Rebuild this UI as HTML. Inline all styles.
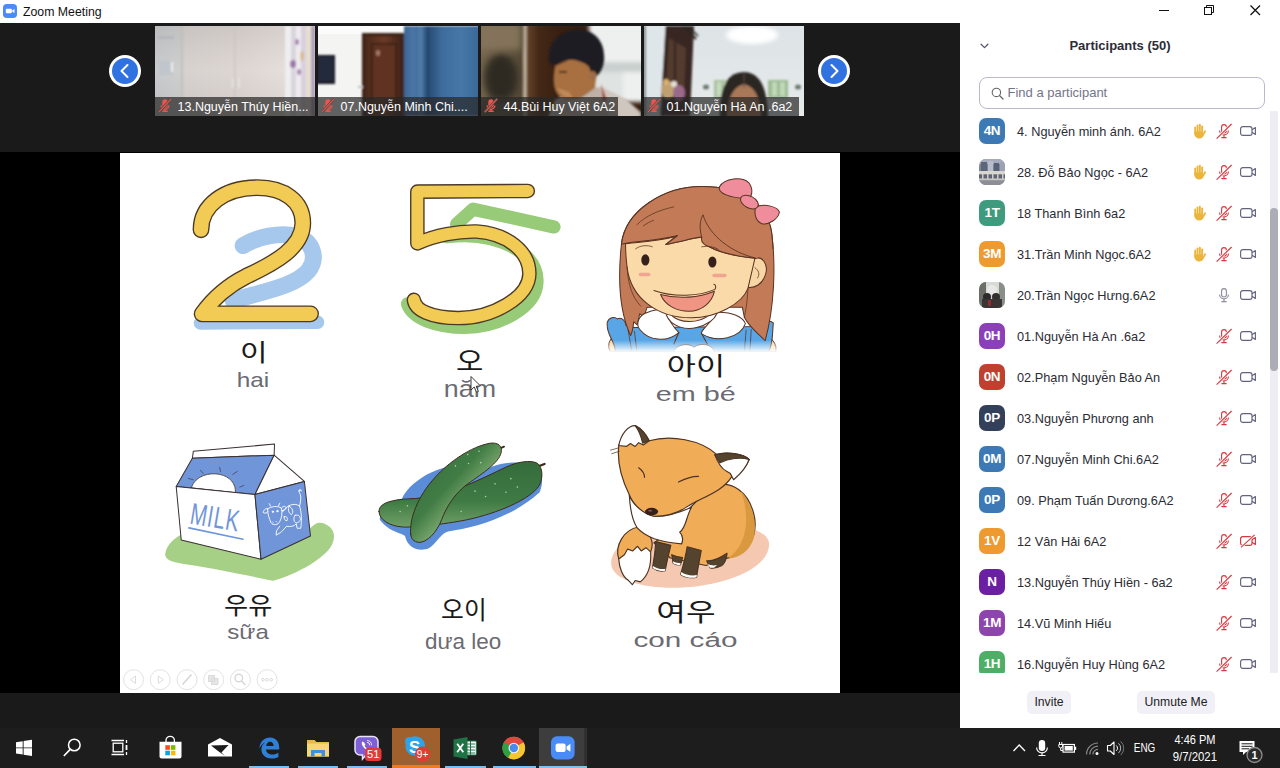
<!DOCTYPE html>
<html lang="vi">
<head>
<meta charset="utf-8">
<title>Zoom Meeting</title>
<style>
*{box-sizing:border-box;margin:0;padding:0}
html,body{width:1280px;height:768px;overflow:hidden;background:#000}
body{position:relative;font-family:"Liberation Sans","Noto Sans CJK KR",sans-serif;color:#222}
.abs{position:absolute}
#titlebar{left:0;top:0;width:1280px;height:23px;background:#fff}
#titlebar .ttl{left:23px;top:4px;font-size:12.3px;color:#111;line-height:16px;white-space:nowrap}
#strip{left:0;top:23px;width:960px;height:129px;background:#1a1a1a}
#stage{left:0;top:152px;width:960px;height:541px;background:#000}
#below{left:0;top:693px;width:960px;height:35px;background:#1a1a1a}
#slide{left:120px;top:153px;width:720px;height:540px;background:#fff;overflow:hidden}
#panel{left:960px;top:23px;width:320px;height:705px;background:#fff;overflow:hidden}
#taskbar{left:0;top:728px;width:1280px;height:40px;background:#1d1d1d}
.thumb{top:26px;width:160px;height:90px;overflow:hidden;background:#ccc}
.thumb .lbl{left:0;top:70.5px;height:19.5px;background:rgba(40,40,40,.72);color:#fff;font-size:12.5px;line-height:21px;padding-left:22.5px;overflow:hidden;padding-right:6px;white-space:nowrap}
.thumb .mic{left:3px;top:72px}
.navbtn{width:32px;height:32px;border-radius:50%;background:#fff;top:55px}
.navbtn i{position:absolute;left:3px;top:3px;width:26px;height:26px;border-radius:50%;background:#3172e1}
/* participants */
.row{left:0;width:320px;height:41px}
.av{left:19px;top:7px;width:26px;height:26px;border-radius:7px;color:#fff;font-weight:bold;font-size:13.5px;line-height:26px;text-align:center;letter-spacing:-.3px}
.nm{left:57px;top:12px;font-size:12.75px;line-height:18px;color:#2b2b33;white-space:nowrap}
.ic{top:11px}
.btn{top:668px;height:23px;border-radius:5px;background:#f0f0f6;font-size:12.2px;line-height:23px;color:#222;text-align:center}
</style>
</head>
<body>
<div id="titlebar" class="abs">
  <svg class="abs" style="left:3.3px;top:4px" width="14" height="14" viewBox="0 0 15 15"><rect x="0" y="0" width="15" height="15" rx="4" fill="#4a8cf7"/><rect x="3" y="5" width="6.5" height="5" rx="1.2" fill="#fff"/><path d="M10 6.8 L12.3 5.3 V9.7 L10 8.2Z" fill="#fff"/></svg>
  <div class="abs ttl">Zoom Meeting</div>
  <svg class="abs" style="left:1150px;top:0" width="130" height="23" viewBox="0 0 130 23" fill="none" stroke="#111" stroke-width="1"><path d="M9 10.5H19"/><rect x="54.5" y="7.5" width="7" height="7"/><path d="M56.5 7.500V5.500H63.500V12.500H61.500"/><path d="M100.500 5.500L110 15M110 5.500L100.500 15" stroke-width="1.250"/></svg>
</div>
<div id="strip" class="abs"></div>
<div id="stage" class="abs"></div>
<div id="below" class="abs"></div>
<svg width="0" height="0" style="position:absolute"><defs>
<symbol id="micoff" viewBox="0 0 14 15"><rect x="4.300" y="1.200" width="5.400" height="8.600" rx="2.700" fill="#e8564c"/><path d="M3.200 7.400a3.800 3.800 0 0 0 7.600 0" fill="none" stroke="#e8564c" stroke-width="1.500"/><path d="M7 11V13M4.300 13.300H9.700" stroke="#e8564c" stroke-width="1.500" fill="none"/><path d="M0.800 14.200L13.200 0.800" stroke="#4a4a4a" stroke-width="2.400"/><path d="M0.800 14.200L13.200 0.800" stroke="#e8564c" stroke-width="1.200"/></symbol>
<filter id="b1" x="-10%" y="-10%" width="120%" height="120%"><feGaussianBlur stdDeviation="1"/></filter>
<filter id="b2" x="-10%" y="-10%" width="120%" height="120%"><feGaussianBlur stdDeviation="2"/></filter>
<filter id="b3" x="-20%" y="-20%" width="140%" height="140%"><feGaussianBlur stdDeviation="3.5"/></filter>
</defs></svg>

<div class="abs navbtn" style="left:109px"><i></i><svg class="abs" style="left:0;top:0" width="32" height="32" viewBox="0 0 32 32"><path d="M18.5 10L12.5 16L18.5 22" fill="none" stroke="#fff" stroke-width="2" stroke-linecap="round" stroke-linejoin="round"/></svg></div>
<div class="abs navbtn" style="left:818px"><i></i><svg class="abs" style="left:0;top:0" width="32" height="32" viewBox="0 0 32 32"><path d="M13.5 10L19.5 16L13.5 22" fill="none" stroke="#fff" stroke-width="2" stroke-linecap="round" stroke-linejoin="round"/></svg></div>

<!-- thumb 1 -->
<div class="abs thumb" style="left:155px">
<svg class="abs" style="left:0;top:0" width="160" height="90" viewBox="0 0 160 90">
<defs><linearGradient id="t1g" x1="0" x2="1"><stop offset="0" stop-color="#c6c8ca"/><stop offset=".16" stop-color="#cdcdcd"/><stop offset=".19" stop-color="#d6d0cd"/><stop offset=".55" stop-color="#dcd5d2"/><stop offset=".8" stop-color="#e4dcd9"/><stop offset="1" stop-color="#dedade"/></linearGradient>
<linearGradient id="t1v" x1="0" y1="0" x2="0" y2="1"><stop offset="0" stop-color="#000" stop-opacity=".06"/><stop offset=".5" stop-color="#fff" stop-opacity=".05"/><stop offset="1" stop-color="#000" stop-opacity=".04"/></linearGradient></defs>
<rect width="160" height="90" fill="url(#t1g)"/>
<rect width="160" height="90" fill="url(#t1v)"/>
<g filter="url(#b1)">
<rect x="3" y="10" width="16" height="3" fill="#b4b8bc"/><rect x="4" y="35" width="14" height="14" fill="#c0c6cc"/><rect x="16" y="36" width="2" height="10" fill="#eef0f2"/>
<rect x="26" y="0" width="2" height="90" fill="#bdbab6" opacity=".7"/>
<rect x="79" y="0" width="1.5" height="90" fill="#c9c3bc" opacity=".8"/><rect x="83" y="52" width="1.5" height="10" fill="#ece8e2"/><rect x="77" y="52" width="1.5" height="10" fill="#ece8e2"/>
<rect x="130" y="0" width="6" height="90" fill="#efeef0"/><rect x="136" y="0" width="5" height="90" fill="#d9d5dc"/><rect x="141" y="0" width="5" height="90" fill="#eeeaf0"/><rect x="146" y="0" width="5" height="90" fill="#d8d0dc"/><rect x="151" y="0" width="5" height="90" fill="#e6dfd0"/><rect x="156" y="0" width="4" height="90" fill="#b0a0bc"/>
<ellipse cx="142" cy="16" rx="2" ry="3" fill="#a887b4"/><ellipse cx="138" cy="38" rx="3" ry="4" fill="#9a78a8"/><ellipse cx="144" cy="46" rx="2" ry="3" fill="#a887b4"/><ellipse cx="147" cy="30" rx="1.5" ry="5" fill="#d8b678"/>
</g>
</svg>
<div class="abs lbl" style="width:160px"><span class="t">13.Nguyễn Thúy Hiền...</span></div>
<svg class="abs mic" width="14" height="15"><use href="#micoff"/></svg>
</div>

<!-- thumb 2 -->
<div class="abs thumb" style="left:318px">
<svg class="abs" style="left:0;top:0" width="160" height="90" viewBox="0 0 160 90">
<defs><linearGradient id="t2c" x1="0" x2="1"><stop offset="0" stop-color="#3d6693"/><stop offset=".12" stop-color="#4b77a6"/><stop offset=".3" stop-color="#335a86"/><stop offset=".34" stop-color="#2b4f78"/><stop offset=".5" stop-color="#3f6c9c"/><stop offset=".75" stop-color="#4677a8"/><stop offset="1" stop-color="#3a6896"/></linearGradient>
<linearGradient id="t2d" x1="0" x2="1"><stop offset="0" stop-color="#4a2a1c"/><stop offset=".5" stop-color="#6b3a26"/><stop offset="1" stop-color="#3e2217"/></linearGradient></defs>
<rect width="160" height="90" fill="#f4f4f2"/>
<rect x="0" y="0" width="88" height="8" fill="#fbfbfb"/>
<g filter="url(#b1)">
<rect x="44" y="7" width="44" height="90" fill="#3a2016"/>
<rect x="47" y="10" width="38" height="90" fill="url(#t2d)"/>
<rect x="54" y="18" width="24" height="62" fill="#5e3221" stroke="#3b1f14" stroke-width="1.5"/>
<ellipse cx="60" cy="27" rx="2" ry="3" fill="#a57c6a"/>
<rect x="-2" y="29" width="19" height="29" fill="#1a1f2b"/><rect x="0" y="31" width="15" height="24" fill="#232a3a"/>
<rect x="86" y="0" width="76" height="90" fill="url(#t2c)"/>
<rect x="108" y="0" width="3" height="90" fill="#24466c" opacity=".8"/>
<rect x="100" y="0" width="5" height="90" fill="#5a86b6" opacity=".6"/>
<rect x="40" y="60" width="5" height="2" fill="#bbb"/>
</g>
</svg>
<div class="abs lbl" style="width:160px"><span class="t">07.Nguyễn Minh Chi....</span></div>
<svg class="abs mic" width="14" height="15"><use href="#micoff"/></svg>
</div>

<!-- thumb 3 -->
<div class="abs thumb" style="left:481px">
<svg class="abs" style="left:0;top:0" width="160" height="90" viewBox="0 0 160 90">
<defs><linearGradient id="t3g" x1="0" x2="1"><stop offset="0" stop-color="#75664c"/><stop offset=".14" stop-color="#62553f"/><stop offset=".25" stop-color="#574a37"/><stop offset=".275" stop-color="#b9ad9c"/><stop offset=".30" stop-color="#5e3f28"/><stop offset=".36" stop-color="#452816"/><stop offset=".5" stop-color="#371f12"/><stop offset="1" stop-color="#371f12"/></linearGradient></defs>
<rect width="160" height="90" fill="url(#t3g)"/>
<g filter="url(#b3)">
<rect x="-4" y="-4" width="44" height="28" fill="#84735a"/>
<ellipse cx="20" cy="52" rx="17" ry="24" fill="#2f2c24"/>
<ellipse cx="18" cy="84" rx="24" ry="10" fill="#5c503c"/>
</g>
<g filter="url(#b2)">
<rect x="108" y="-4" width="60" height="80" fill="#eef0ef"/>
<rect x="116" y="36" width="50" height="10" fill="#c9cfce"/>
<rect x="112" y="46" width="30" height="30" fill="#dfe3e2"/>
</g>
<g filter="url(#b1)">
<path d="M66 94 L74 74 Q100 58 122 62 L146 74 L160 86 L160 94Z" fill="#bdb1a8"/>
<path d="M118 60 L146 74 L160 90 L130 94Z" fill="#cfc6be"/>
<path d="M120 58 L126 74 L122 76Z" fill="#a8453c"/>
<path d="M74 40 Q70 62 78 70 Q86 76 100 72 L114 62 L116 42 L96 30Z" fill="#a8703f"/>
<path d="M76 62 Q80 72 92 72 L88 66Z" fill="#c08a5c"/>
<path d="M68 36 Q66 10 92 4 Q116 2 122 22 Q126 40 116 50 L110 46 Q108 38 100 36 Q86 30 74 40Z" fill="#1d1b22"/>
<ellipse cx="112" cy="50" rx="3.500" ry="5" fill="#9c6c4a"/>
<path d="M78 46h8" stroke="#2a1a12" stroke-width="1.500"/>
</g>
</svg>
<div class="abs lbl" style="width:137px"><span class="t">44.Bùi Huy Việt 6A2</span></div>
<svg class="abs mic" width="14" height="15"><use href="#micoff"/></svg>
</div>

<!-- thumb 4 -->
<div class="abs thumb" style="left:644px">
<svg class="abs" style="left:0;top:0" width="160" height="90" viewBox="0 0 160 90">
<defs><radialGradient id="t4l" cx="0.66" cy="0.1" r="0.32" gradientTransform="scale(1 .55)"><stop offset="0" stop-color="#fff"/><stop offset=".55" stop-color="#fdfefe"/><stop offset="1" stop-color="#e3e8ea" stop-opacity="0"/></radialGradient>
<linearGradient id="t4w" x1="0" y1="0" x2="0" y2="1"><stop offset="0" stop-color="#dde3e6"/><stop offset="1" stop-color="#e6eaeb"/></linearGradient></defs>
<rect width="160" height="90" fill="url(#t4w)"/>
<g filter="url(#b2)"><ellipse cx="108" cy="9" rx="26" ry="9" fill="#fff"/></g>
<g filter="url(#b1)">
<rect x="0" y="0" width="22" height="90" fill="#dfe6ea"/>
<path d="M21.500 0 L50 0 L46 90 L16 90Z" fill="#382822"/>
<path d="M25 12 L42 22 L40 72 L21 72Z" fill="#523a2e"/>
<path d="M31 16 L31 70" stroke="#2e201a" stroke-width="1.500"/>
<path d="M40 0 L52 13" stroke="#2a2622" stroke-width="2"/><path d="M44 0 L54 10" stroke="#2a2622" stroke-width="1.500"/>
<rect x="0" y="0" width="1.500" height="90" fill="#2a2a2a"/>
<ellipse cx="24" cy="64" rx="7" ry="9" fill="#c0a070"/><ellipse cx="35" cy="67" rx="6" ry="8" fill="#9a6a8a"/><ellipse cx="22" cy="56" rx="3" ry="3" fill="#d9b070"/><ellipse cx="30" cy="58" rx="3" ry="3" fill="#e8e0d8"/>
<rect x="70" y="54" width="18" height="18" fill="#a9c2a0"/><rect x="124" y="54" width="20" height="18" fill="#9dbb94"/>
<rect x="73" y="56" width="4" height="14" fill="#c8dcc0"/><rect x="80" y="56" width="4" height="14" fill="#c8dcc0"/><rect x="128" y="56" width="5" height="14" fill="#c0d8b8"/><rect x="136" y="56" width="5" height="14" fill="#c0d8b8"/>
<ellipse cx="62" cy="61" rx="3" ry="2.5" fill="#6a7a6a"/><ellipse cx="154" cy="61" rx="3" ry="2.5" fill="#6a7a6a"/>
<path d="M76 94 Q74 46 100 46 Q124 46 124 94Z" fill="#2b2624"/>
<path d="M83 94 Q83 62 100 58 Q117 62 117 94Z" fill="#a87858"/>
<path d="M100 47 V62" stroke="#5a4c46" stroke-width="1"/>
</g>
</svg>
<div class="abs lbl" style="width:155px"><span class="t">01.Nguyễn Hà An .6a2</span></div>
<svg class="abs mic" width="14" height="15"><use href="#micoff"/></svg>
</div>

<div id="slide" class="abs">
<svg class="abs" style="left:0;top:0" width="720" height="540" viewBox="120 153 720 540">
<defs>
<linearGradient id="fadeb" x1="0" y1="0" x2="0" y2="1"><stop offset="0" stop-color="#fff" stop-opacity="0"/><stop offset="1" stop-color="#fff"/></linearGradient>
<linearGradient id="cuc1" x1="0" y1="0" x2="0" y2="1"><stop offset="0" stop-color="#356b3c"/><stop offset=".6" stop-color="#3f7a44"/><stop offset="1" stop-color="#6fa066"/></linearGradient>
<linearGradient id="cuc2" x1="0" y1="0" x2="1" y2="1"><stop offset="0" stop-color="#34693b"/><stop offset=".42" stop-color="#417c45"/><stop offset=".6" stop-color="#7aa86e"/><stop offset=".74" stop-color="#447f48"/><stop offset="1" stop-color="#34693b"/></linearGradient>
</defs>
<rect x="120" y="153" width="720" height="540" fill="#fff"/>

<!-- number 2 -->
<g transform="translate(180,170) scale(0.2213)" fill="none" stroke-linecap="round" stroke-linejoin="round">
<path d="M285,342 C350,300 450,282 525,298 C605,322 622,402 580,455 C520,525 380,548 240,590" stroke="#a6c8ec" stroke-width="76"/>
<path d="M92,692 L622,688" stroke="#a6c8ec" stroke-width="60"/>
<path id="p2" d="M95,270 C95,160 200,80 350,80 C470,80 555,140 555,240 C555,350 430,420 300,480 C220,520 150,580 100,650 L590,650" stroke="#4b3a26" stroke-width="76"/>
<path d="M95,270 C95,160 200,80 350,80 C470,80 555,140 555,240 C555,350 430,420 300,480 C220,520 150,580 100,650 L590,650" stroke="#f2cb55" stroke-width="64"/>
</g>

<!-- number 5 -->
<g transform="translate(390,170) scale(0.2278)" fill="none" stroke-linecap="round" stroke-linejoin="round">
<path d="M292,238 L365,172 L720,250" stroke="#98cb78" stroke-width="58"/>
<path d="M250,292 C330,282 400,290 440,300 C580,335 650,410 644,495 C640,600 480,690 330,690 C200,690 100,650 78,588" stroke="#98cb78" stroke-width="60"/>
<path d="M605,92 L120,95 L120,322 C200,285 300,268 380,270 C520,280 612,360 612,455 C610,560 450,650 300,650 C180,650 110,615 105,570" stroke="#4b3a26" stroke-width="64"/>
<path d="M605,92 L120,95 L120,322 C200,285 300,268 380,270 C520,280 612,360 612,455 C610,560 450,650 300,650 C180,650 110,615 105,570" stroke="#f2cb55" stroke-width="52"/>
</g>

<!-- girl -->
<g transform="translate(590,165) scale(0.2539)" stroke="#5a3323" stroke-width="4" stroke-linejoin="round" stroke-linecap="round">
<!-- dress & arms -->
<path d="M80,735 C66,712 76,688 92,676 L130,735Z" fill="#f7d7a6"/>
<path d="M702,676 C722,688 738,712 732,735 L690,735Z" fill="#f7d7a6"/>
<path d="M68,620 C74,600 96,596 108,606 C122,598 140,610 142,632 L175,640 L680,636 C690,612 706,610 722,622 C718,660 722,700 704,735 L100,735 C98,690 62,668 68,620Z" fill="#58a6e6"/>
<path d="M150,650 L165,735 M175,655 L185,735 M615,650 L608,735 M635,648 L630,735" fill="none" stroke-width="3"/>
<!-- hair back -->
<path d="M160,672 C108,560 112,420 124,310 C140,180 290,85 440,85 C600,85 700,150 716,270 C732,400 726,560 690,692 C660,662 628,640 608,600 L600,560 L225,560 L212,600 L196,585 L186,630 L172,618 C170,640 166,660 160,672Z" fill="#c27b56"/>
<!-- neck -->
<path d="M330,560 L470,560 L470,620 L330,620Z" fill="#f7d7a6" stroke="none"/>
<!-- ribbon -->
<path d="M330,735 C340,705 390,700 410,718 C430,700 480,702 490,735" fill="#fff" stroke-width="3"/>
<!-- collar -->
<path d="M215,585 C250,568 290,563 300,575 C310,620 340,650 350,660 C300,702 230,690 198,650 C180,630 188,600 215,585Z" fill="#fff"/>
<path d="M500,580 C560,578 602,598 612,625 C592,682 500,702 440,665 C430,655 470,630 500,580Z" fill="#fff"/>
<path d="M300,590 C320,640 380,650 420,640 C460,630 490,610 500,585" fill="#fff"/>
<path d="M320,590 C350,625 430,625 470,590" fill="#f7d7a6"/>
<path d="M350,660 L330,705 M440,665 L462,705" fill="none"/>
<!-- ear -->
<path d="M640,372 C680,350 705,395 690,435 C678,470 650,485 622,482Z" fill="#f7d7a6"/>
<path d="M650,405 C665,415 670,430 660,445" fill="none" stroke-width="3"/>
<!-- face -->
<path d="M140,310 C200,302 290,300 340,280 L300,312 C360,302 420,282 440,286 C448,300 442,312 470,322 C520,350 600,362 650,366 L622,486 C600,545 500,602 400,602 C262,602 160,522 146,402 C142,370 140,340 140,310Z" fill="#f9daa8"/>
<!-- fringe overlay -->
<path d="M126,312 C170,300 260,300 345,278 L298,313 C350,304 410,286 440,284 C436,300 446,314 470,322 C520,350 600,362 655,368 C700,340 716,300 716,270 C700,150 600,85 440,85 C290,85 140,180 126,312Z" fill="#c27b56" stroke="none"/>
<path d="M124,312 C170,300 260,300 345,278 L298,313 C350,304 410,286 440,284 C436,300 446,314 470,322 C520,350 600,362 655,368" fill="none"/>
<path d="M124,310 C140,180 290,85 440,85 C600,85 700,150 716,270 C718,290 720,310 721,330" fill="none"/>
<path d="M440,284 C430,250 432,220 445,196 C470,280 560,345 650,366" fill="none" stroke-width="3.500"/>
<path d="M185,235 C220,200 270,178 330,165 M210,240 C225,228 240,222 250,218" fill="none" stroke-width="3"/>
<path d="M146,402 C150,470 165,520 200,556 M622,486 C620,540 612,580 608,600" fill="none" stroke-width="3"/>
<!-- eyes -->
<ellipse cx="218" cy="374" rx="16" ry="22" fill="#35211a" stroke="none"/>
<ellipse cx="482" cy="382" rx="16" ry="22" fill="#35211a" stroke="none"/>
<path d="M180,330 C200,315 225,315 245,322 M440,322 C465,318 490,322 505,332" fill="none" stroke-width="3"/>
<rect x="192" y="424" width="46" height="14" rx="7" fill="#f2a391" stroke="none"/>
<rect x="482" y="428" width="56" height="14" rx="7" fill="#f2a391" stroke="none"/>
<!-- mouth -->
<path d="M278,510 C350,530 430,522 490,497 C482,540 440,576 390,576 C340,576 295,552 278,510Z" fill="#f09484"/>
<path d="M252,494 C330,522 430,518 492,490 C498,480 495,472 488,470" fill="none"/>
<!-- bow -->
<path d="M602,130 C560,130 500,112 510,86 C530,50 600,45 626,70 C640,90 640,110 632,126Z" fill="#f08d9d"/>
<path d="M652,165 C690,150 740,165 746,186 C740,216 700,236 680,232 C655,226 645,196 652,165Z" fill="#f08d9d"/>
<ellipse cx="628" cy="146" rx="38" ry="23" transform="rotate(28 628 146)" fill="#f08d9d"/>
<rect x="40" y="690" width="720" height="48" fill="url(#fadeb)" stroke="none"/>
<rect x="40" y="736" width="720" height="40" fill="#fff" stroke="none"/>
</g>

<!-- milk -->
<g transform="translate(155,435) scale(0.2019)" stroke="#3a3030" stroke-width="5" stroke-linejoin="round" stroke-linecap="round">
<path d="M50,592 C56,540 108,500 150,486 L500,560 L760,470 C800,430 815,430 840,440 C885,460 895,495 880,535 C855,605 700,692 585,722 C480,702 300,662 160,642 C90,630 52,622 50,592Z" fill="#a5d086" stroke="none"/>
<path d="M185,115 L190,80 L592,45 L590,100Z" fill="#fff"/>
<path d="M105,255 L185,115 L590,100 L495,295Z" fill="#7195d9"/>
<path d="M495,295 L590,100 L740,230Z" fill="#fff"/>
<path d="M180,260 C200,200 270,185 320,195 C372,206 402,242 398,284Z" fill="#fff" stroke-width="4"/>
<path d="M165,215 L190,222 M225,175 L240,192 M320,160 L325,182 M385,195 L408,180 M420,258 L440,250" fill="none" stroke-width="3"/>
<path d="M105,255 L495,295 L525,615 L130,520Z" fill="#fff"/>
<path d="M495,295 L740,230 L770,500 L525,615Z" fill="#7195d9"/>
<g stroke="none" fill="#7195d9"><text transform="translate(168,438) rotate(9.500) scale(.66,1)" font-family="'Liberation Sans',sans-serif" font-size="150" letter-spacing="6">MILK</text></g>
<path d="M168,460 L436,516" stroke="#7195d9" stroke-width="8" fill="none"/>
<g fill="none" stroke="#fff" stroke-width="4.500">
<path d="M558,366 C575,352 610,350 626,362 C632,385 628,410 618,428 C612,446 585,450 574,434 C566,412 556,390 558,366Z"/>
<path d="M558,366 C548,362 538,370 536,384 C546,390 556,386 560,380 M626,362 C634,350 646,350 650,362 C646,372 636,376 628,374"/>
<path d="M572,352 L566,340 M612,350 L618,338"/>
<circle cx="584" cy="380" r="3.500" fill="#fff"/><circle cx="606" cy="377" r="3.500" fill="#fff"/>
<path d="M582,430 l3,3 M600,428 l3,3"/>
<path d="M632,380 C650,350 690,332 716,352 C728,390 726,430 722,462 L704,462 L700,440 C690,452 670,456 652,452 L624,482 L600,496 L602,474 L618,452"/>
<path d="M716,352 C722,330 724,310 720,296 C716,288 712,282 718,272 M718,272 l-8,6 M718,272 l8,4"/>
<path d="M664,352 C680,362 690,380 676,394 C664,390 656,372 664,352Z M694,398 C708,392 720,400 720,420 C712,436 698,440 690,428 C686,416 688,404 694,398Z M640,404 C650,400 660,410 654,424 C644,426 638,416 640,404Z"/>
</g>
</g>

<!-- cucumbers -->
<g transform="translate(370,435) scale(0.1628)" stroke="#3a2a1c" stroke-width="6" stroke-linejoin="round" stroke-linecap="round">
<path d="M60,520 C120,600 200,600 215,620 C230,690 290,712 340,702 C400,690 430,602 480,592 C640,572 880,502 1042,352 C1062,300 1062,260 1042,200 C950,152 820,170 760,190 C700,205 660,260 600,300 L520,190 C400,195 240,290 196,392 C130,400 60,440 60,520Z" fill="#5b8cd8" stroke="none"/>
<path d="M1035,192 L1072,178" stroke-width="14"/>
<path d="M55,470 C55,420 120,395 280,390 C500,370 700,260 830,200 C900,165 990,150 1030,175 C1060,200 1065,260 1040,310 C980,400 780,480 600,520 C450,550 250,570 200,565 C120,560 55,520 55,470Z" fill="url(#cuc1)"/>
<path d="M800,82 L823,72" stroke-width="12"/>
<path d="M250,610 C240,520 290,380 400,260 C480,170 620,70 740,50 C790,45 815,70 805,110 C790,170 700,230 600,300 C520,360 470,440 440,520 C410,600 350,660 300,660 C270,655 252,640 250,610Z" fill="url(#cuc2)"/>
<g fill="#a9d29a" stroke="none"><circle cx="600" cy="120" r="5"/><circle cx="670" cy="100" r="5"/><circle cx="525" cy="190" r="5"/><circle cx="605" cy="175" r="5"/><circle cx="680" cy="170" r="5"/><circle cx="865" cy="268" r="5"/><circle cx="768" cy="300" r="5"/><circle cx="905" cy="320" r="5"/><circle cx="835" cy="352" r="5"/><circle cx="645" cy="345" r="5"/><circle cx="710" cy="378" r="5"/><circle cx="560" cy="470" r="5"/><circle cx="185" cy="470" r="5"/><circle cx="230" cy="435" r="5"/></g>
</g>

<!-- fox -->
<g transform="translate(600,415) scale(0.2344)" stroke="#4a3424" stroke-width="5" stroke-linejoin="round" stroke-linecap="round">
<path d="M48,640 C40,560 150,490 330,470 C520,450 700,470 720,540 C735,620 620,700 430,728 C250,755 60,720 48,640Z" fill="#f5c9b1" stroke="none"/>
<!-- body -->
<path d="M470,310 C560,268 640,330 660,440 C672,530 622,600 540,612 L452,642 L300,610 L230,545 L330,480 L380,400Z" fill="#f1ac58"/>
<path d="M600,322 C650,380 670,460 657,520 C642,580 592,610 545,612 C625,560 645,440 600,322Z" fill="#d9993e" stroke="none"/>
<!-- legs -->
<path d="M455,622 C485,625 520,605 542,590 C540,615 532,632 520,642 C505,650 485,655 470,652Z" fill="#54442f"/>
<path d="M306,596 C320,602 338,606 352,608 C350,620 346,632 342,640 C330,640 318,636 312,632Z" fill="#54442f"/>
<path d="M238,540 C236,580 230,620 224,652 C240,664 262,668 278,664 C284,630 294,590 302,556Z" fill="#54442f"/>
<path d="M372,562 C366,600 354,645 344,680 C362,692 392,698 412,692 C418,650 426,610 432,578Z" fill="#54442f"/>
<path d="M226,644 C240,654 262,660 279,656 L278,664 C262,668 240,664 224,652Z M347,670 C362,682 392,688 413,683 L412,692 C392,698 362,692 344,680Z M458,636 C470,642 488,644 500,640 L486,652 L470,652Z M312,624 C322,630 334,632 344,632 L342,640 C330,640 318,636 312,632Z" fill="#fff" stroke="none"/>
<!-- tail -->
<path d="M165,478 C100,488 62,560 80,614 L216,584 C234,540 215,500 165,478Z" fill="#f1ac58"/>
<path d="M80,614 C82,650 96,690 120,704 L138,724 L150,706 L172,712 C200,690 220,650 216,584 L196,566 L176,580 L160,560 L140,580 L118,572 L104,596Z" fill="#fff"/>
<!-- chest -->
<path d="M125,340 C128,400 138,450 158,480 C175,500 200,515 232,528 C262,538 300,546 348,550 C356,530 352,512 340,500 C368,482 366,436 390,394 C330,420 280,436 230,432 C180,420 140,380 125,340Z" fill="#fff"/>
<!-- head -->
<path d="M80,130 C100,72 150,82 210,110 C300,84 430,104 500,170 C560,160 620,170 636,190 C620,232 580,260 560,266 C520,330 430,352 370,392 C330,420 280,432 230,432 C180,420 140,380 125,340 C100,290 70,220 80,130Z" fill="#f1ac58"/>
<!-- ears -->
<path d="M80,130 C90,80 120,45 150,45 C180,60 200,90 210,110 L185,128 L165,118 L150,134 L130,122 L112,134Z" fill="#fff"/>
<path d="M150,45 C180,60 200,90 210,110 L182,120 C176,92 166,66 150,45Z" fill="#54442f"/>
<path d="M490,170 C540,155 610,165 636,190 C620,236 586,262 570,276 L556,250 L540,240 C520,230 505,210 490,170Z" fill="#fff"/>
<path d="M490,170 C540,155 610,165 636,190 C600,180 550,184 512,204Z" fill="#54442f"/>
<path d="M165,225 C180,236 190,250 190,266 M335,286 C365,270 395,262 420,262" fill="none" stroke-width="5"/>
<ellipse cx="220" cy="412" rx="28" ry="16" fill="#38201a" stroke="none"/>
<ellipse cx="214" cy="408" rx="8" ry="4" fill="#8a5a4a" stroke="none"/>
<path d="M45,150 L80,140 M50,165 L82,155" fill="none" stroke-width="3"/>
</g>

<!-- labels -->
<g font-family="'Noto Sans CJK KR','NanumGothic',sans-serif" fill="#1a1a1a">
<text transform="translate(240.11,361.34) scale(1.282,1)" font-size="23.30">이</text>
<text transform="translate(456.11,371.19) scale(1.135,1)" font-size="26.22">오</text>
<text transform="translate(666.85,375.23) scale(1.286,1)" font-size="24.62">아이</text>
<text transform="translate(223.99,613.96) scale(1.085,1)" font-size="24.20">우유</text>
<text transform="translate(441.06,619.21) scale(0.999,1)" font-size="24.84">오이</text>
<text transform="translate(656.35,621.30) scale(1.291,1)" font-size="24.95">여우</text>
</g>
<g font-family="'Liberation Sans',sans-serif" fill="#6b6b72">
<text transform="translate(236.80,387.00) scale(1.187,1)" font-size="20.50">hai</text>
<text transform="translate(443.82,397.00) scale(1.167,1)" font-size="23.00">năm</text>
<text transform="translate(655.85,401.40) scale(1.404,1)" font-size="20.50">em bé</text>
<text transform="translate(227.28,639.00) scale(1.174,1)" font-size="20.50">sữa</text>
<text transform="translate(425.00,648.50) scale(1.020,1)" font-size="22.00">dưa leo</text>
<text transform="translate(633.51,646.70) scale(1.414,1)" font-size="21.00">con cáo</text>
</g>

<!-- slide controls -->
<g fill="none" stroke="#e3e3e3" stroke-width="1">
<circle cx="133.600" cy="679.700" r="10"/><circle cx="160.200" cy="679.700" r="10"/><circle cx="187" cy="679.700" r="10"/><circle cx="213.700" cy="679.700" r="10"/><circle cx="240.400" cy="679.700" r="10"/><circle cx="267.100" cy="679.700" r="10"/>
<path d="M135.500,676 L130.500,679.700 L135.500,683.500Z M158.300,676 L163.300,679.700 L158.300,683.500Z" stroke="#dcdcdc"/>
<path d="M182.500,684.500 L191.500,674.500" stroke="#d8d8d8" stroke-width="1.800"/>
<path d="M208.500,675.500 h6 v6 h-6z M211.500,678.500 h6.500 v6 h-6.500z" fill="#e6e6e6" stroke="#dadada"/>
<circle cx="238.800" cy="678" r="3.800" stroke="#d8d8d8" stroke-width="1.400"/><path d="M241.500,681 L245.500,685" stroke="#d8d8d8" stroke-width="1.600"/>
<circle cx="263" cy="679.700" r="1.300" stroke="#dadada"/><circle cx="267.100" cy="679.700" r="1.300" stroke="#dadada"/><circle cx="271.200" cy="679.700" r="1.300" stroke="#dadada"/>
</g>

<!-- cursor -->
<path d="M471,376.500 L471,390 L474.200,387 L476.500,392.200 L478.400,391.400 L476.200,386.300 L480.500,386 Z" fill="#fff" stroke="#222" stroke-width="0.9" stroke-linejoin="round"/>
</svg>

</div>
<div id="panel" class="abs">
<svg width="0" height="0" style="position:absolute"><defs>
<symbol id="pmicoff" viewBox="0 0 16 16"><rect x="5.6" y="1.6" width="4.8" height="8.4" rx="2.4" fill="none" stroke="#d9363e" stroke-width="1.1"/><path d="M3.6 7.6a4.4 4.4 0 0 0 8.8 0" fill="none" stroke="#d9363e" stroke-width="1.1"/><path d="M8 12V14.4M5.4 14.6H10.6" stroke="#d9363e" stroke-width="1.1" fill="none"/><path d="M8.2 9.2a1 1 0 1 0 1.4 -1.4" stroke="#d9363e" stroke-width=".8" fill="none"/><path d="M0.6 15.6L15.6 1" stroke="#fff" stroke-width="2.6"/><path d="M0.6 15.6L15.6 1" stroke="#d9363e" stroke-width="1.1"/></symbol>
<symbol id="pmicon" viewBox="0 0 16 16"><rect x="5.6" y="1.6" width="4.8" height="8.4" rx="2.4" fill="none" stroke="#8a8a9a" stroke-width="1.1"/><path d="M3.6 7.6a4.4 4.4 0 0 0 8.8 0" fill="none" stroke="#8a8a9a" stroke-width="1.1"/><path d="M8 12V14.4M5.4 14.6H10.6" stroke="#8a8a9a" stroke-width="1.1" fill="none"/></symbol>
<symbol id="pcam" viewBox="0 0 16 10"><rect x=".6" y=".6" width="11.4" height="8.8" rx="2.2" fill="none" stroke="#62637f" stroke-width="1.15"/><path d="M12 3.7L15.4 1.6V8.4L12 6.3" fill="none" stroke="#62637f" stroke-width="1.15" stroke-linejoin="round"/></symbol>
<symbol id="pcamoff" viewBox="0 0 16 14"><rect x=".6" y="2.6" width="11.4" height="8.8" rx="2.2" fill="none" stroke="#d9363e" stroke-width="1.15"/><path d="M12 5.7L15.4 3.6V10.4L12 8.3" fill="none" stroke="#d9363e" stroke-width="1.15" stroke-linejoin="round"/><path d="M1 13.4L14.6 .8" stroke="#fff" stroke-width="2.4"/><path d="M1 13.4L14.6 .8" stroke="#d9363e" stroke-width="1.1"/></symbol>
<symbol id="phand" viewBox="0 0 13 16"><g fill="#eab53a"><rect x="1.300" y="3.600" width="1.900" height="8" rx=".95"/><rect x="3.600" y="1.500" width="1.900" height="9" rx=".95"/><rect x="5.900" y=".8" width="1.900" height="9.500" rx=".95"/><rect x="8.200" y="2.400" width="1.900" height="8.500" rx=".95"/><path d="M1.300 8.500H10.100V10.400L11.300 7.600a1 1 0 0 1 1.700 .9L10.300 13.200a4.400 4.400 0 0 1 -3.800 2.300a5 5 0 0 1 -5.200 -4.800z"/></g></symbol>
</defs></svg>
<svg class="abs" style="left:19.5px;top:20px" width="9" height="6.3" viewBox="0 0 10 7"><path d="M1.2 1.4L5 5.2L8.8 1.4" fill="none" stroke="#555566" stroke-width="1.4" stroke-linecap="round" stroke-linejoin="round"/></svg>
<div class="abs" id="phead" style="left:0;top:13.500px;width:320px;text-align:center;font-weight:bold;font-size:13px;line-height:18px;color:#2d2d38">Participants (50)</div>
<div class="abs" style="left:19px;top:54px;width:286px;height:32px;border:1px solid #b9b9cd;border-radius:8px;background:#fff"></div>
<svg class="abs" style="left:30.5px;top:63.5px" width="13" height="13" viewBox="0 0 13 13"><circle cx="5.4" cy="5.4" r="4.2" fill="none" stroke="#666" stroke-width="1.1"/><path d="M8.5 8.5L12 12" stroke="#666" stroke-width="1.2" stroke-linecap="round"/></svg>
<div class="abs" id="pfind" style="left:47.500px;top:61px;font-size:13px;line-height:18px;color:#747488;white-space:nowrap">Find a participant</div>
<div class="abs" style="left:0;top:88px;width:320px;height:562px;overflow:hidden">
<div class="abs row" style="top:0px"><div class="abs av" style="background:#3d7ab5">4N</div><div class="abs nm">4. Nguyễn minh ánh. 6A2</div><svg class="abs" style="left:232.5px;top:12px" width="13" height="16"><use href="#phand"/></svg><svg class="abs" style="left:256px;top:12px" width="16" height="16"><use href="#pmicoff"/></svg><svg class="abs" style="left:280px;top:15px" width="16" height="10"><use href="#pcam"/></svg></div>
<div class="abs row" style="top:41px"><svg class="abs" style="left:19px;top:7px" width="26" height="26" viewBox="0 0 26 26"><defs><clipPath id="c1"><rect width="26" height="26" rx="7"/></clipPath><filter id="ab" x="-10%" y="-10%" width="120%" height="120%"><feGaussianBlur stdDeviation=".7"/></filter></defs><g clip-path="url(#c1)"><rect width="26" height="26" fill="#7d8699"/><g filter="url(#ab)"><rect x="0" y="0" width="26" height="5" fill="#a4acbd"/><rect x="2" y="3" width="6" height="9" fill="#5d6579"/><rect x="9" y="2" width="5" height="10" fill="#b7bdca"/><rect x="15" y="4" width="5" height="8" fill="#596176"/><rect x="21" y="3" width="5" height="9" fill="#9aa2b4"/><rect x="0" y="12" width="26" height="3.500" fill="#d9d6cf"/><rect x="0" y="15.500" width="26" height="4" fill="#5f6473"/><rect x="3" y="15" width="1.500" height="5" fill="#d0cdc6"/><rect x="8" y="15" width="1.500" height="5" fill="#d0cdc6"/><rect x="13" y="15" width="1.500" height="5" fill="#d0cdc6"/><rect x="18" y="15" width="1.500" height="5" fill="#d0cdc6"/><rect x="23" y="15" width="1.500" height="5" fill="#d0cdc6"/><rect x="0" y="19.500" width="26" height="2" fill="#c9c6c2"/><rect x="0" y="21.500" width="26" height="5" fill="#8e8f96"/></g></g></svg><div class="abs nm">28. Đỗ Bảo Ngọc - 6A2</div><svg class="abs" style="left:232.5px;top:12px" width="13" height="16"><use href="#phand"/></svg><svg class="abs" style="left:256px;top:12px" width="16" height="16"><use href="#pmicoff"/></svg><svg class="abs" style="left:280px;top:15px" width="16" height="10"><use href="#pcam"/></svg></div>
<div class="abs row" style="top:82px"><div class="abs av" style="background:#3f9b7d">1T</div><div class="abs nm">18 Thanh Bình 6a2</div><svg class="abs" style="left:232.5px;top:12px" width="13" height="16"><use href="#phand"/></svg><svg class="abs" style="left:256px;top:12px" width="16" height="16"><use href="#pmicoff"/></svg><svg class="abs" style="left:280px;top:15px" width="16" height="10"><use href="#pcam"/></svg></div>
<div class="abs row" style="top:123px"><div class="abs av" style="background:#ef9a2e">3M</div><div class="abs nm">31.Trần Minh Ngọc.6A2</div><svg class="abs" style="left:232.5px;top:12px" width="13" height="16"><use href="#phand"/></svg><svg class="abs" style="left:256px;top:12px" width="16" height="16"><use href="#pmicoff"/></svg><svg class="abs" style="left:280px;top:15px" width="16" height="10"><use href="#pcam"/></svg></div>
<div class="abs row" style="top:164px"><svg class="abs" style="left:19px;top:7px" width="26" height="26" viewBox="0 0 26 26"><defs><clipPath id="c2"><rect width="26" height="26" rx="7"/></clipPath></defs><g clip-path="url(#c2)"><rect width="26" height="26" fill="#d8dad6"/><rect x="0" y="0" width="7" height="26" fill="#6a6e66"/><rect x="20" y="0" width="6" height="26" fill="#8a8e88"/><circle cx="13" cy="8" r="5" fill="#e8e8e6"/><circle cx="8" cy="15" r="4" fill="#2c2a2a"/><circle cx="17" cy="15" r="4" fill="#343030"/><rect x="3" y="17" width="20" height="9" fill="#3a3434"/><rect x="9" y="18" width="3" height="6" fill="#8a3030"/></g></svg><div class="abs nm">20.Trần Ngọc Hưng.6A2</div><svg class="abs" style="left:256px;top:12px" width="16" height="16"><use href="#pmicon"/></svg><svg class="abs" style="left:280px;top:15px" width="16" height="10"><use href="#pcam"/></svg></div>
<div class="abs row" style="top:205px"><div class="abs av" style="background:#8b3fb9">0H</div><div class="abs nm">01.Nguyễn Hà An .6a2</div><svg class="abs" style="left:256px;top:12px" width="16" height="16"><use href="#pmicoff"/></svg><svg class="abs" style="left:280px;top:15px" width="16" height="10"><use href="#pcam"/></svg></div>
<div class="abs row" style="top:246px"><div class="abs av" style="background:#c0402f">0N</div><div class="abs nm">02.Phạm Nguyễn Bảo An</div><svg class="abs" style="left:256px;top:12px" width="16" height="16"><use href="#pmicoff"/></svg><svg class="abs" style="left:280px;top:15px" width="16" height="10"><use href="#pcam"/></svg></div>
<div class="abs row" style="top:287px"><div class="abs av" style="background:#33405b">0P</div><div class="abs nm">03.Nguyễn Phương anh</div><svg class="abs" style="left:256px;top:12px" width="16" height="16"><use href="#pmicoff"/></svg><svg class="abs" style="left:280px;top:15px" width="16" height="10"><use href="#pcam"/></svg></div>
<div class="abs row" style="top:328px"><div class="abs av" style="background:#3d7ab5">0M</div><div class="abs nm">07.Nguyễn Minh Chi.6A2</div><svg class="abs" style="left:256px;top:12px" width="16" height="16"><use href="#pmicoff"/></svg><svg class="abs" style="left:280px;top:15px" width="16" height="10"><use href="#pcam"/></svg></div>
<div class="abs row" style="top:369px"><div class="abs av" style="background:#3d7ab5">0P</div><div class="abs nm">09. Phạm Tuấn Dương.6A2</div><svg class="abs" style="left:256px;top:12px" width="16" height="16"><use href="#pmicoff"/></svg><svg class="abs" style="left:280px;top:15px" width="16" height="10"><use href="#pcam"/></svg></div>
<div class="abs row" style="top:410px"><div class="abs av" style="background:#ef9a2e">1V</div><div class="abs nm">12 Vân Hải 6A2</div><svg class="abs" style="left:256px;top:12px" width="16" height="16"><use href="#pmicoff"/></svg><svg class="abs" style="left:280px;top:13px" width="16" height="14"><use href="#pcamoff"/></svg></div>
<div class="abs row" style="top:451px"><div class="abs av" style="background:#6b1fa2">N</div><div class="abs nm">13.Nguyễn Thúy Hiền - 6a2</div><svg class="abs" style="left:256px;top:12px" width="16" height="16"><use href="#pmicoff"/></svg><svg class="abs" style="left:280px;top:15px" width="16" height="10"><use href="#pcam"/></svg></div>
<div class="abs row" style="top:492px"><div class="abs av" style="background:#8e44ad">1M</div><div class="abs nm">14.Vũ Minh Hiếu</div><svg class="abs" style="left:256px;top:12px" width="16" height="16"><use href="#pmicoff"/></svg><svg class="abs" style="left:280px;top:15px" width="16" height="10"><use href="#pcam"/></svg></div>
<div class="abs row" style="top:533px"><div class="abs av" style="background:#4caf65">1H</div><div class="abs nm">16.Nguyễn Huy Hùng 6A2</div><svg class="abs" style="left:256px;top:12px" width="16" height="16"><use href="#pmicoff"/></svg><svg class="abs" style="left:280px;top:15px" width="16" height="10"><use href="#pcam"/></svg></div>
</div>
<div class="abs" style="left:310px;top:88px;width:8px;height:562px;background:#ededf3"></div>
<div class="abs" style="left:310px;top:185px;width:8px;height:163px;background:#acacb7;border-radius:4px"></div>
<div class="abs btn" style="left:67px;width:44px">Invite</div>
<div class="abs btn" style="left:177px;width:78px">Unmute Me</div>
</div>
<div id="taskbar" class="abs">
<!-- cells -->
<div class="abs" style="left:392px;top:0;width:48px;height:40px;background:#a0602e"></div>
<div class="abs" style="left:392px;top:37px;width:48px;height:3px;background:#f07a22"></div>
<div class="abs" style="left:539px;top:0;width:48px;height:40px;background:#3d3d3d"></div>
<div class="abs" style="left:583.500px;top:0;width:3.500px;height:40px;background:#303030"></div>
<div class="abs" style="left:249px;top:37.5px;width:40px;height:2.5px;background:#7dbcec"></div>
<div class="abs" style="left:298px;top:37.5px;width:40px;height:2.5px;background:#7dbcec"></div>
<div class="abs" style="left:347px;top:37.5px;width:40px;height:2.5px;background:#7dbcec"></div>
<div class="abs" style="left:445px;top:37.5px;width:41px;height:2.5px;background:#7dbcec"></div>
<div class="abs" style="left:493px;top:37.5px;width:43px;height:2.5px;background:#7dbcec"></div>
<div class="abs" style="left:539px;top:37.5px;width:48px;height:2.5px;background:#84bfec"></div>
<svg class="abs" style="left:0;top:0" width="1280" height="40" viewBox="0 728 1280 40">
<!-- start -->
<g fill="#fff"><path d="M16,742.200 L22.700,741.200 V747.400 H16Z M23.600,741.100 L32,739.800 V747.400 H23.600Z M16,748.300 H22.700 V754.600 L16,753.600Z M23.600,748.300 H32 V756 L23.600,754.700Z"/></g>
<!-- search -->
<circle cx="74.300" cy="745" r="5.800" fill="none" stroke="#fff" stroke-width="1.500"/><path d="M70.200,749.400 L64.300,755.500" stroke="#fff" stroke-width="1.700" stroke-linecap="round"/>
<!-- task view -->
<g fill="none" stroke="#fff" stroke-width="1.300"><rect x="113.200" y="743.200" width="9.600" height="8.600"/><path d="M111.500,740.500h12.500M111.500,754.500h12.500M126.500,740v3M126.500,752v3"/><rect x="125.600" y="745" width="1.800" height="5" fill="#fff" stroke="none"/></g>
<!-- store -->
<path d="M166,742 V740.500 a4.200,4.200 0 0 1 8.400,0 V742" fill="none" stroke="#fff" stroke-width="1.300"/>
<path d="M159.500,741.800 H181.500 V756.500 a2,2 0 0 1 -2,2 H161.500 a2,2 0 0 1 -2,-2Z" fill="#fff"/>
<rect x="165.300" y="745.200" width="4.600" height="4.600" fill="#f25022"/><rect x="170.800" y="745.200" width="4.600" height="4.600" fill="#7fba00"/><rect x="165.300" y="750.700" width="4.600" height="4.600" fill="#00a4ef"/><rect x="170.800" y="750.700" width="4.600" height="4.600" fill="#ffb900"/>
<!-- mail -->
<path d="M208,744.500 L220,738 L232,744.500 V756.500 H208Z" fill="#fff"/><path d="M211,745.500 L228.500,745 L221.500,752.500 L225,756 L218,751Z" fill="#1c1c1c"/>
<!-- edge -->
<path d="M259.400,748.600 C259.600,741.500 264.400,737.400 270,737.400 C275.600,737.400 279.200,741.600 279.200,747.400 V749.600 H266 C266.200,753 269,754.600 272.200,754.600 C274.600,754.600 276.800,753.800 278.400,752.800 V757 C276.400,758 274,758.500 271.400,758.500 C265.200,758.500 261.400,754.400 261.400,749.200 C261.400,746.200 262.800,743.800 265.200,742.400 C263,743.200 260.400,745.400 259.400,748.600Z M266.200,746 H273.600 C273.600,743.400 272.200,741.800 270,741.800 C268,741.800 266.600,743.400 266.200,746Z" fill="#2f7fd6"/>
<!-- explorer -->
<path d="M307,740 H314.500 L316.500,742 H329 V756.500 H307Z" fill="#e8b84a"/><path d="M307,743.500 H329 V756.500 H307Z" fill="#f7d772"/><path d="M311,750 H325 V756.500 H321.500 V753 H314.500 V756.500 H311Z" fill="#3f8fdc"/>
<!-- viber -->
<path d="M360,736.500 H373 a5,5 0 0 1 5,5 V750 a5,5 0 0 1 -5,5 H366 L362.500,759 V755 H360 a5,5 0 0 1 -5,-5 V741.500 a5,5 0 0 1 5,-5Z" fill="#7d5fd6" stroke="#e9e2fb" stroke-width="1.500"/>
<path d="M362.500,741.500 C361.500,742.500 361.600,744 362.600,745.800 C363.800,748 365.600,749.600 367.600,750.600 C368.800,751.200 369.800,750.800 370.400,749.800 L369,748.200 L367.600,748.800 C366.400,748.200 365.200,747 364.600,745.800 L365.400,744.600 L364,742.600Z" fill="#fff"/><path d="M367,740.500 a5,5 0 0 1 4.600,4.800 M367,742.300 a3,3 0 0 1 2.800,3" stroke="#fff" stroke-width=".8" fill="none"/>
<rect x="365" y="747.800" width="16.500" height="13.200" rx="3.500" fill="#e23b36"/>
<text x="373.300" y="758.400" font-family="'Liberation Sans',sans-serif" font-size="11" fill="#fff" text-anchor="middle" textLength="12.500" lengthAdjust="spacingAndGlyphs">51</text>
<!-- skype -->
<circle cx="415.200" cy="746" r="9.800" fill="#2ea3e8"/><circle cx="409.500" cy="741.500" r="4.500" fill="#2ea3e8"/><circle cx="421" cy="751" r="4" fill="#2ea3e8"/>
<text x="414.700" y="752.500" font-family="'Liberation Sans',sans-serif" font-size="17" font-weight="bold" fill="#fff" text-anchor="middle">S</text>
<circle cx="422.500" cy="754" r="7.500" fill="#e23b36"/>
<text x="422.600" y="757.600" font-family="'Liberation Sans',sans-serif" font-size="10" fill="#fff" text-anchor="middle" textLength="11.500" lengthAdjust="spacingAndGlyphs">9+</text>
<!-- excel -->
<path d="M466,741 H475.500 a.8,.8 0 0 1 .8,.8 V754.200 a.8,.8 0 0 1 -.8,.8 H466Z" fill="#fff" stroke="#1f7244" stroke-width="1"/><path d="M467,744h8M467,747h8M467,750h8M467,753h8M470.500,741v14" stroke="#1f7244" stroke-width="1"/>
<path d="M453.500,739.500 L467.500,737 V759 L453.500,756.500Z" fill="#1f7244"/>
<path d="M457.200,743.800 L463.300,752.200 M463.300,743.800 L457.200,752.200" stroke="#fff" stroke-width="1.800"/>
<!-- chrome -->
<circle cx="513.800" cy="748" r="11.300" fill="#dd4b3e"/>
<path d="M513.800,748 L504.010,742.350 A11.300,11.300 0 0 0 508.150,757.790 L513.800,748Z" fill="#2ea043"/>
<path d="M503.800,742.700 A11.300,11.300 0 0 0 508.150,757.790 L513.800,748Z" fill="#2ea043"/>
<path d="M513.800,748 L508.150,757.790 A11.300,11.300 0 0 0 525.100,748 Z" fill="#f6c72d"/>
<path d="M513.800,748 H525.100 A11.300,11.300 0 0 0 523.590,742.350Z" fill="#f6c72d"/>
<path d="M504.010,742.350 A11.300,11.300 0 0 1 523.590,742.350 L513.800,742.350Z" fill="#dd4b3e"/>
<circle cx="513.800" cy="748" r="5.300" fill="#f4f4f4"/><circle cx="513.800" cy="748" r="4.200" fill="#4a8bf0"/>
<!-- zoom -->
<rect x="551" y="736.300" width="23.600" height="23.200" rx="6" fill="#4a8cf7"/><rect x="555.600" y="743.600" width="10" height="8.400" rx="2" fill="#fff"/><path d="M566.600,746.400 L570.400,743.800 V751.800 L566.600,749.200Z" fill="#fff"/>
<!-- tray -->
<path d="M1013.500,751 L1019.200,745 L1025,751" fill="none" stroke="#fff" stroke-width="1.300"/>
<rect x="1038.800" y="740" width="6.400" height="11" rx="3.200" fill="#fff"/><path d="M1036.600,747.500 a5.400,5.400 0 0 0 10.800,0" fill="none" stroke="#fff" stroke-width="1.100"/><path d="M1042,753V755.300M1038.500,755.500H1045.500" stroke="#fff" stroke-width="1.100"/>
<rect x="1063" y="744.500" width="11.400" height="7.600" fill="none" stroke="#fff" stroke-width="1.200"/><rect x="1064.600" y="746" width="8.200" height="4.600" fill="#fff"/><rect x="1075" y="746.700" width="1.200" height="3.200" fill="#fff"/><path d="M1059.500,742v2.500M1061.800,742v2.500M1058.800,744.500h3.800v1.500a1.900,1.900 0 0 1 -3.800,0zM1060.700,748v2.500h2.300" fill="none" stroke="#fff" stroke-width="1"/>
<g fill="none" stroke="#8a8a8a" stroke-width="1.200"><path d="M1086.500,754.500 a11.500,11.500 0 0 1 11.500,-11.500"/><path d="M1089.700,754.500 a8.300,8.300 0 0 1 8.300,-8.300"/><path d="M1092.900,754.500 a5.100,5.100 0 0 1 5.100,-5.100"/></g><circle cx="1097" cy="753.600" r="1.500" fill="#fff"/>
<path d="M1107.500,745.500 H1110.300 L1114,742 V754.500 L1110.300,751 H1107.500Z" fill="none" stroke="#fff" stroke-width="1.100" stroke-linejoin="round"/><path d="M1116.300,745.500 a3.600,3.600 0 0 1 0,5.400" fill="none" stroke="#fff" stroke-width="1"/><path d="M1118.500,743.300 a6.600,6.600 0 0 1 0,9.800" fill="none" stroke="#bbb" stroke-width="1"/><path d="M1120.700,741.300 a9.400,9.400 0 0 1 0,13.800" fill="none" stroke="#777" stroke-width="1"/>
<g font-family="'Liberation Sans',sans-serif" fill="#fff" font-size="12">
<text x="1133.800" y="752.300" textLength="21.500" lengthAdjust="spacingAndGlyphs">ENG</text>
<text x="1174.500" y="743.700" textLength="41" lengthAdjust="spacingAndGlyphs">4:46 PM</text>
<text x="1172.700" y="761.300" textLength="44.300" lengthAdjust="spacingAndGlyphs">9/7/2021</text>
</g>
<path d="M1239.500,741 H1254.500 V752 H1246 L1243,755 V752 H1239.500Z" fill="#fff"/><path d="M1241.500,743.800H1252.500M1241.500,746.300H1252.500M1241.500,748.800H1249" stroke="#1c1c1c" stroke-width="1"/>
<circle cx="1254.500" cy="755" r="7.500" fill="#2b2b2b" stroke="#8c8c8c" stroke-width="1.300"/>
<text x="1254.500" y="759" font-family="'Liberation Sans',sans-serif" font-size="11" font-weight="bold" fill="#fff" text-anchor="middle">1</text>
</svg>

</div>
</body>
</html>
